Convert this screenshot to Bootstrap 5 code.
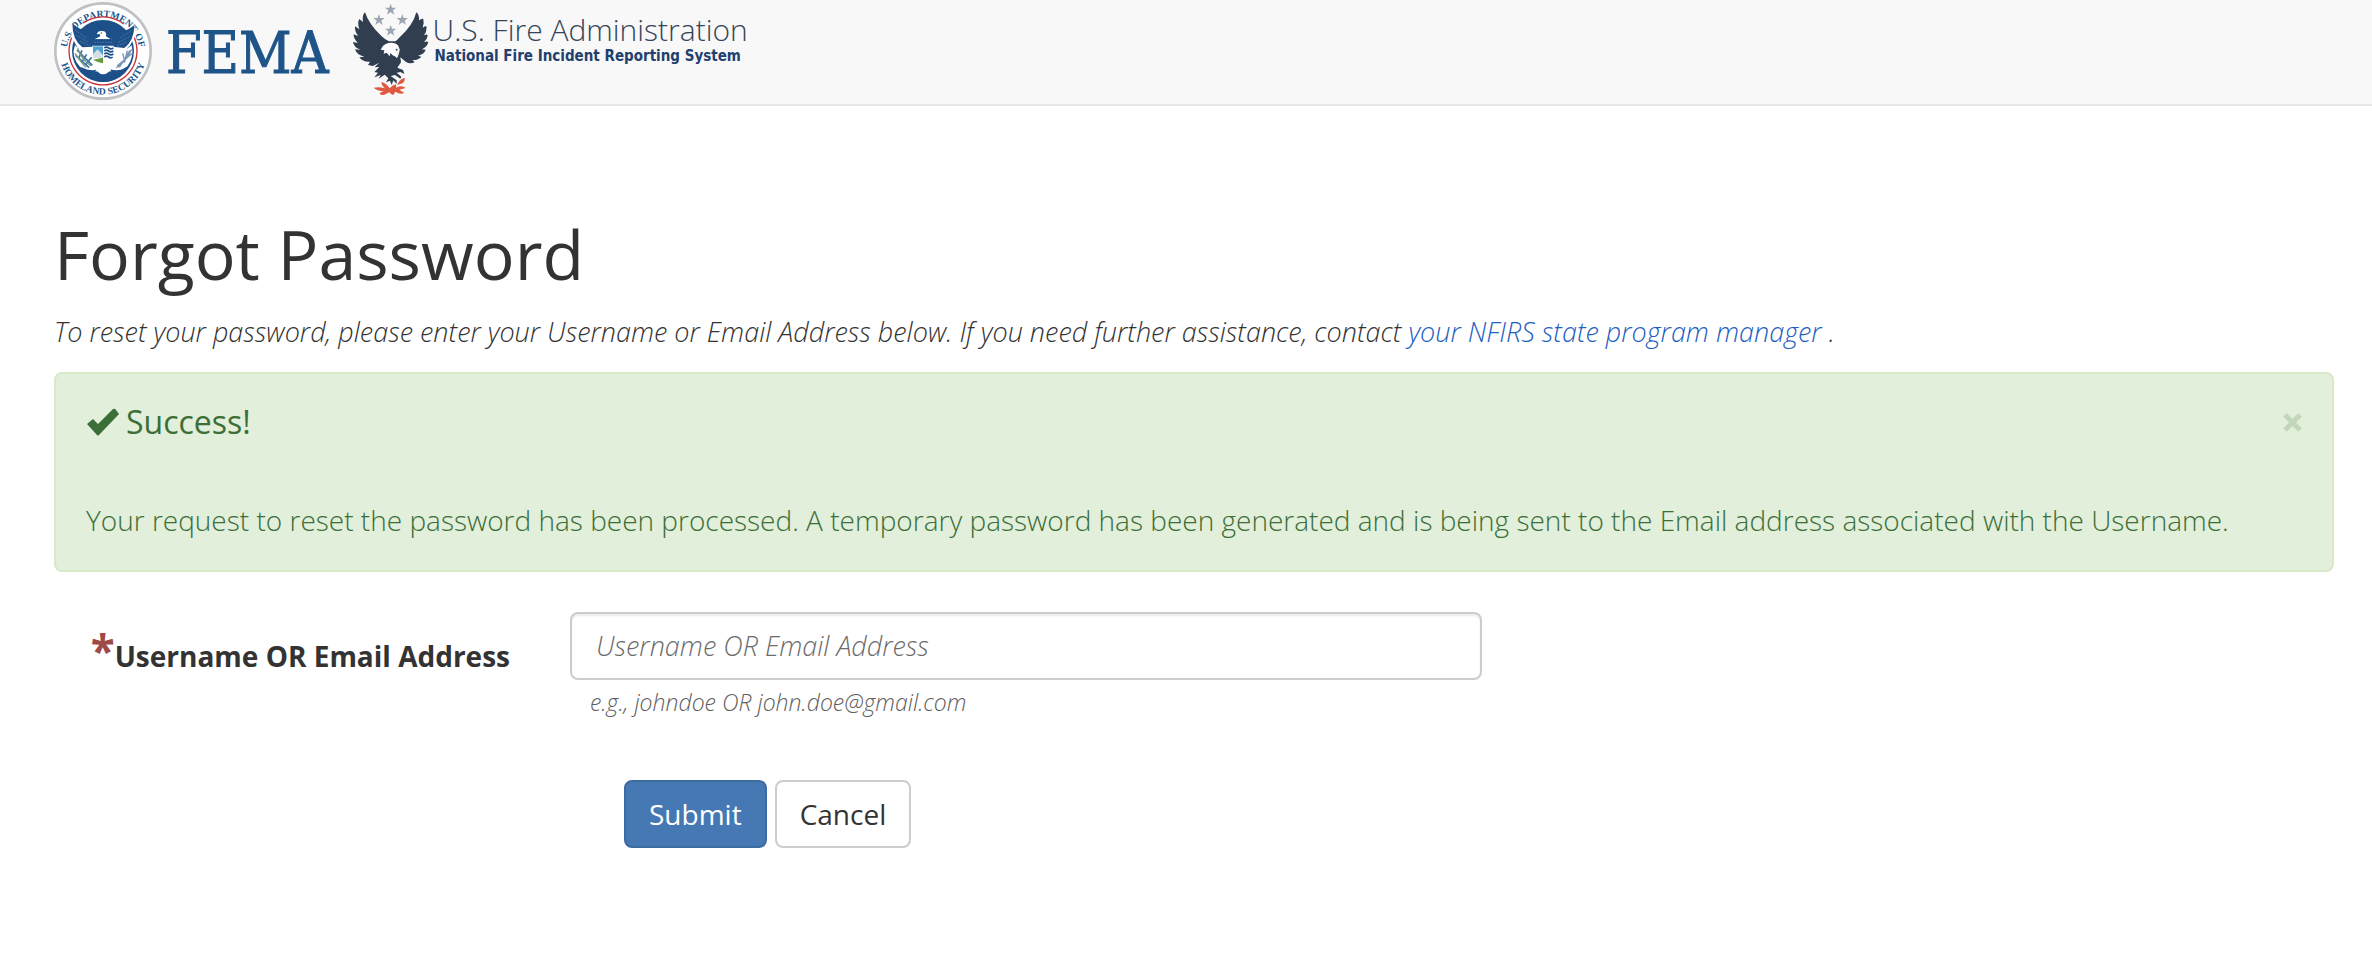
<!DOCTYPE html>
<html lang="en">
<head>
<meta charset="utf-8">
<meta name="viewport" content="width=device-width, initial-scale=1">
<title>Forgot Password</title>
<link href="https://cdn.jsdelivr.net/npm/bootstrap@5.3.0/dist/css/bootstrap.min.css" rel="stylesheet">
<style>
body{font-family:"Open Sans",sans-serif;font-size:28px;line-height:40px;font-weight:300;color:#333;background:#fff}
.topbar{min-height:106px;background:#f8f8f8;border-bottom:2px solid #e7e7e7;padding:0 38px 0 54px}
.seal{margin-top:2px}
.fema{font-family:"DejaVu Serif Condensed","DejaVu Serif",serif;font-stretch:condensed;font-size:57px;line-height:60px;color:#1f5488;font-weight:400;-webkit-text-stroke:1px #1f5488;margin:23px 18px 0 14px}
.usfa-text{padding-top:14px}
.usfa-name{font-size:30px;line-height:32px;color:#34455a}
.usfa-sys{font-family:"DejaVu Sans Condensed","DejaVu Sans",sans-serif;font-stretch:condensed;font-weight:700;font-size:15px;line-height:20px;color:#22406e;padding-left:2px}
.page{padding:110px 38px 96px 54px}
.page-title{font-size:68px;line-height:76px;font-weight:400;color:#333;margin-bottom:20px}
.intro{font-size:27px;font-weight:350;margin-bottom:20px}
.intro a{color:#1f5fbf;text-decoration:none}
.alert-done{background:#e1efdb;border:2px solid #d8e8c8;border-radius:8px;color:#3c6e38;padding:30px;margin-bottom:40px}
.alert-done h2{font-size:32px;line-height:36px;font-weight:400;gap:6px}
.alert-head{margin-bottom:60px}
.alert-close{color:#c2d6bc;line-height:0}
.label-col{width:516px;padding:18px 60px 0 0;line-height:40px;font-weight:700}
.required-mark{font-size:44px;line-height:40px;color:#a04a47}
.input-col{width:40%}
.form-control{font-size:27px;line-height:40px;font-weight:350;border:2px solid #ccc;border-radius:8px;padding:12px 24px;color:#555;box-shadow:inset 0 2px 2px rgba(0,0,0,.075)}
.form-control::placeholder{color:#6c6c6c;font-style:italic;opacity:1}
.help{font-size:23px;line-height:32px;color:#606060;padding:6px 0 0 20px}
.actions{margin:62px 0 0 570px;gap:8px}
.actions .btn{font-size:28px;line-height:40px;border-width:2px;border-radius:8px;padding:12px 23px}
.btn-submit{background:#4679b3;border-color:#3c6ba0;color:#fff}
.btn-cancel{background:#fff;border-color:#ccc;color:#333}
</style>
</head>
<body>
<header class="topbar d-flex align-items-start">
<svg class="seal flex-shrink-0" width="98" height="98" viewBox="11 6 294 294" role="img" aria-label="U.S. Department of Homeland Security seal">
<defs><path id="arcTop" d="M48 161A110 110 0 1 1 268 161"/><path id="arcBottom" d="M27 153A131 131 0 0 0 289 153"/></defs>
<circle cx="158" cy="153" r="143" fill="#fff" stroke="#bfc1c4" stroke-width="8"/>
<g font-family="Liberation Serif, serif" font-size="29" font-weight="700" fill="#22568d" text-anchor="middle">
<text><textPath href="#arcTop" startOffset="50%">U.S. DEPARTMENT OF</textPath></text>
<text><textPath href="#arcBottom" startOffset="50%">HOMELAND SECURITY</textPath></text></g>
<g fill="none" stroke="#c9303a" stroke-width="4"><path d="M99 69A102 102 0 0 1 220 72M64 113A102 102 0 1 0 252 113"/></g>
<circle cx="158" cy="153" r="93" fill="#1d5089"/>
<path d="M62 66Q62 125 88 148L74 136Q60 170 90 202Q122 224 140 214Q158 232 178 214Q210 218 232 198Q252 170 244 136L228 148Q256 122 256 80Q240 96 206 104L178 112L130 110Q84 100 62 66Z" fill="#fff"/>
<path d="M66 70Q92 96 132 96Q142 78 158 80Q174 80 182 100Q222 100 252 76Q252 122 222 144L186 140H128L96 142Q66 120 66 70Z" fill="#1d5089"/>
<path d="M75 91L110 115M78 105L113 127M88 124L119 137M241 94L206 116M237 110L202 129M228 127L198 138M133 117H185M132 127H188" stroke="#678bb2" stroke-width="2" stroke-dasharray="5 3"/>
<path d="M139 103Q143 91 155 93Q170 93 167 109L180 117H134L150 109L148 102Z" fill="#fff"/><circle cx="153" cy="99" r="2" fill="#1d5089"/>
<path d="M80 150L126 196M76 166L116 203M95 151L85 176M109 163L94 187M124 172L105 196" stroke="#39739f" stroke-width="5" fill="none"/>
<path d="M82 145Q94 180 122 198M74 160Q90 184 106 202" stroke="#7a9a83" stroke-width="4" fill="none"/>
<path d="M244 148Q228 184 198 204M239 151L207 202M247 159L200 198M231 152L222 188M217 160L224 186" stroke="#7896b7" stroke-width="4" fill="none"/>
<path d="M90 200Q122 216 140 208L130 226Q160 244 188 226L178 208Q210 216 230 200Q200 246 158 246Q116 244 90 200Z" fill="#1d5089"/>
<path d="M126 137H190V165Q188 184 158 196Q128 184 126 165Z" fill="#fff"/>
<path d="M128 139H158V166H128Z" fill="#4fa0d4"/><path d="M128 162L142 148L158 166V174H128Z" fill="#d6dfe4"/>
<path d="M128 179L158 173V190Q142 187 128 179Z" fill="#639b3b"/>
<path d="M162 144Q168 139 175 144T189 144M162 153Q168 148 175 153T189 153M162 162Q168 157 175 162T189 162M162 171Q168 166 175 171T187 171" stroke="#1d5089" stroke-width="5" fill="none"/>
<path d="M134 188L122 206L138 199L136 214L146 207L158 216L170 207L182 214L178 198L196 203L184 187Q158 202 134 188Z" fill="#fff"/>
</svg>
<span class="fema">FEMA</span>
<svg class="flex-shrink-0" width="86" height="104" viewBox="0 0 258 312" role="img" aria-label="U.S. Fire Administration eagle">
<g fill="#9ca6b2"><path id="star" d="M131 11L135 23H148L138 31L142 44L131 36L120 44L124 31L114 23H127Z"/><use href="#star" x="-35" y="31"/><use href="#star" x="35" y="31"/><use href="#star" y="63"/></g>
<path fill="#303e4f" d="M54 37Q66 74 104 109Q114 119 126 124L145 124Q151 120 158 112Q198 76 208 37Q217 43 216 61Q226 53 229 58Q232 68 227 83Q237 76 239 81Q239 96 231 106Q241 101 242 107Q240 119 231 127Q240 122 244 126Q241 140 225 148L236 149Q232 162 213 167L223 170Q214 181 196 180L203 186Q190 194 176 185L160 172L162 187L151 203L168 210L172 222L160 216L149 218L163 230L160 236L144 225L131 228L149 241L149 252L139 241L134 255L129 242L117 247L124 235L113 224L95 236L101 225L82 232L93 218L82 216L97 201L83 202L96 188L78 198L63 195L69 185Q48 187 37 172L52 170Q30 166 24 148L40 149Q20 142 18 126L32 129Q18 113 20 103L33 108Q22 92 24 79L37 88Q30 68 37 57L48 66Q45 44 54 37Z"/>
<path fill="#fff" d="M116 132Q132 124 148 132Q159 139 157 156L150 174Q146 169 137 166L130 159L128 169L119 158L110 161L112 151L101 149Q105 137 116 132Z"/>
<path d="M151 137L158 148L153 169L149 174L148 162L142 153" fill="#f3f3f3"/><circle cx="149" cy="149" r="2.5" fill="#303e4f"/>
<path fill="#de5940" d="M80 263Q96 259 114 265Q101 253 104 246Q120 251 128 265Q137 254 147 253L148 263Q164 254 176 264L157 269L172 279Q161 285 145 275L139 285Q132 285 127 277L112 284Q99 287 98 279L110 273Q91 273 80 263ZM151 255Q154 240 173 233Q175 247 162 251Z"/>
</svg>
<div class="usfa-text">
<div class="usfa-name">U.S. Fire Administration</div>
<div class="usfa-sys">National Fire Incident Reporting System</div>
</div>
</header>
<main class="page">
<h1 class="page-title">Forgot Password</h1>
<p class="intro fst-italic">To reset your password, please enter your Username or Email Address below. If you need further assistance, contact <a href="#">your NFIRS state program manager</a> .</p>
<div class="alert-done" role="alert">
<div class="alert-head d-flex justify-content-between align-items-center">
<h2 class="d-flex align-items-center mb-0"><svg width="34" height="28" viewBox="0 0 34 28" aria-hidden="true"><path d="M1 16L7 11L12 16L27 1Q29 0 30 2L33 6L13 27Q12 28 11 27Z" fill="currentColor"/></svg>Success!</h2>
<button type="button" class="alert-close border-0 bg-transparent p-0" aria-label="Close"><svg width="19" height="19" viewBox="0 0 19 19"><path d="M2 2L17 17M17 2L2 17" stroke="currentColor" stroke-width="5"/></svg></button>
</div>
<p class="mb-0">Your request to reset the password has been processed. A temporary password has been generated and is being sent to the Email address associated with the Username.</p>
</div>
<form>
<div class="d-flex align-items-start">
<label for="account" class="label-col text-end flex-shrink-0"><span class="required-mark">*</span>Username OR Email Address</label>
<div class="input-col">
<input type="text" class="form-control" id="account" placeholder="Username OR Email Address" aria-describedby="accountHelp">
<div id="accountHelp" class="help fst-italic">e.g., johndoe OR john.doe@gmail.com</div>
</div>
</div>
<div class="actions d-flex">
<button type="submit" class="btn btn-submit">Submit</button>
<button type="button" class="btn btn-cancel">Cancel</button>
</div>
</form>
</main>
<script src="https://cdn.jsdelivr.net/npm/bootstrap@5.3.0/dist/js/bootstrap.bundle.min.js"></script>
</body>
</html>
